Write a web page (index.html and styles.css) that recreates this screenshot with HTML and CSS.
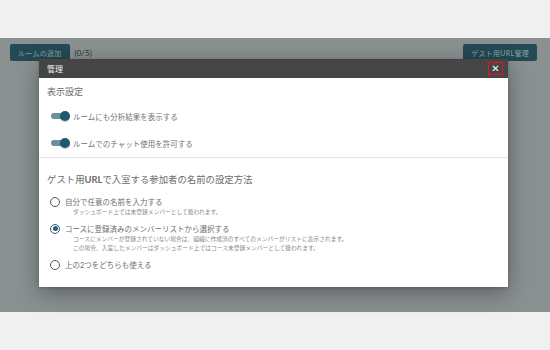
FILE: index.html
```html
<!DOCTYPE html>
<html lang="ja">
<head>
  <meta charset="UTF-8">
  <meta name="viewport" content="width=device-width, initial-scale=1.0">
  <title>管理</title>
  <link rel="stylesheet" href="styles.css">
</head>
<body>
  <div class="top-band"></div>

  <div class="screen">
    <div class="toolbar">
      <div class="toolbar-left">
        <button class="btn">ルームの追加</button>
        <span class="count">(0/5)</span>
      </div>
      <button class="btn">ゲスト用URL管理</button>
    </div>

    <div class="modal">
      <div class="modal-header">
        <span class="modal-title">管理</span>
        <button class="close-btn">&#x2715;</button>
      </div>

      <div class="modal-body">
        <div class="section">
          <h3 class="section-title">表示設定</h3>
          <div class="toggle-row">
            <span class="toggle"><span class="knob"></span></span>
            <span class="toggle-label">ルームにも分析結果を表示する</span>
          </div>
          <div class="toggle-row">
            <span class="toggle"><span class="knob"></span></span>
            <span class="toggle-label">ルームでのチャット使用を許可する</span>
          </div>
        </div>

        <div class="section section-guest">
          <h3 class="section-title title-guest">ゲスト用<b>URL</b>で入室する参加者の名前の設定方法</h3>

          <div class="options">
            <div class="option">
              <div class="option-main">
                <span class="radio"></span>
                <span class="option-label">自分で任意の名前を入力する</span>
              </div>
              <p class="option-note">ダッシュボード上では未登録メンバーとして扱われます。</p>
            </div>

            <div class="option">
              <div class="option-main">
                <span class="radio checked"></span>
                <span class="option-label">コースに登録済みのメンバーリストから選択する</span>
              </div>
              <p class="option-note">コースにメンバーが登録されていない場合は、組織に作成済のすべてのメンバーがリストに表示されます。</p>
              <p class="option-note">この場合、入室したメンバーはダッシュボード上ではコース未登録メンバーとして扱われます。</p>
            </div>

            <div class="option">
              <div class="option-main">
                <span class="radio"></span>
                <span class="option-label">上の2つをどちらも使える</span>
              </div>
            </div>
          </div>
        </div>
      </div>
    </div>
  </div>

  <div class="bottom-band"></div>
</body>
</html>
```

FILE: styles.css
```css
/* Global Styles */
* {
  margin: 0;
  padding: 0;
  box-sizing: border-box;
  font-family: Lato, "Noto Sans CJK JP", sans-serif;
}

body {
  width: 550px;
  height: 350px;
  background: #f0f0f0;
  overflow: hidden;
}

.top-band {
  height: 38px;
}

.bottom-band {
  height: 38px;
}

/* dimmed page behind the dialog */
.screen {
  position: relative;
  height: 274px;
  background: #8b9191;
}

.toolbar {
  display: flex;
  justify-content: space-between;
  align-items: center;
  padding: 6px 13px 0 10px;
}

.toolbar-left {
  display: flex;
  align-items: center;
  gap: 5px;
}

.btn {
  height: 17px;
  padding: 0 8px;
  border: none;
  border-radius: 2px;
  background: #244a55;
  color: #8ea2a7;
  font-size: 7px;
  letter-spacing: 0.3px;
}

.count {
  font-size: 8px;
  color: #2a2d2d;
}

/* Dialog */
.modal {
  position: absolute;
  left: 39px;
  top: 21px;
  width: 469px;
  height: 228px;
  background: #fff;
  box-shadow: 0 6px 22px rgba(0, 0, 0, 0.35), 0 1px 3px rgba(0, 0, 0, 0.2);
}

.modal-header {
  display: flex;
  justify-content: space-between;
  align-items: center;
  height: 19px;
  padding: 0 5px 0 8px;
  background: #454545;
}

.modal-title {
  font-size: 8px;
  color: #f2f2f2;
}

.close-btn {
  width: 15px;
  height: 13px;
  border: 1px solid #e8161b;
  background: transparent;
  color: #fff;
  font-family: "DejaVu Sans", sans-serif;
  font-size: 10px;
  line-height: 11px;
}

.modal-body {
  padding: 7px 0 0;
}

.section {
  padding: 0 8px;
}

.section-title {
  font-size: 9px;
  font-weight: normal;
  line-height: 14px;
  color: #6a6a6a;
  margin-bottom: 3.5px;
}

.title-guest {
  font-size: 9.4px;
}

.section-title b {
  font-weight: bold;
}

.toggle-row {
  display: flex;
  align-items: center;
  gap: 4px;
  height: 27px;
  padding-left: 4px;
}

.toggle {
  position: relative;
  width: 18px;
  height: 6px;
  border-radius: 3px;
  background: #6b909c;
}

.knob {
  position: absolute;
  right: -1px;
  top: -2px;
  width: 10px;
  height: 10px;
  border-radius: 50%;
  background: #1f5a70;
  box-shadow: 0 1px 1px rgba(0, 0, 0, 0.25);
}

.toggle-label {
  font-size: 7.5px;
  color: #737373;
}

.section-guest {
  border-top: 1px solid #e4e4e4;
  padding-top: 15px;
}

.options {
  display: flex;
  flex-direction: column;
  gap: 8px;
  margin-top: 10px;
  padding-left: 3px;
}

.option-main {
  display: flex;
  align-items: center;
  gap: 5px;
  height: 10px;
}

.radio {
  width: 10px;
  height: 10px;
  border: 1.3px solid #555;
  border-radius: 50%;
  display: flex;
  justify-content: center;
  align-items: center;
}

.radio.checked {
  border-color: #2a5f74;
}

.radio.checked::after {
  content: "";
  width: 5px;
  height: 5px;
  border-radius: 50%;
  background: #2a5f74;
}

.option-label {
  font-size: 7.5px;
  color: #6e6e6e;
}

.option-note {
  margin-left: 23px;
  font-size: 5.75px;
  line-height: 9px;
  color: #8a8a8a;
}
```
